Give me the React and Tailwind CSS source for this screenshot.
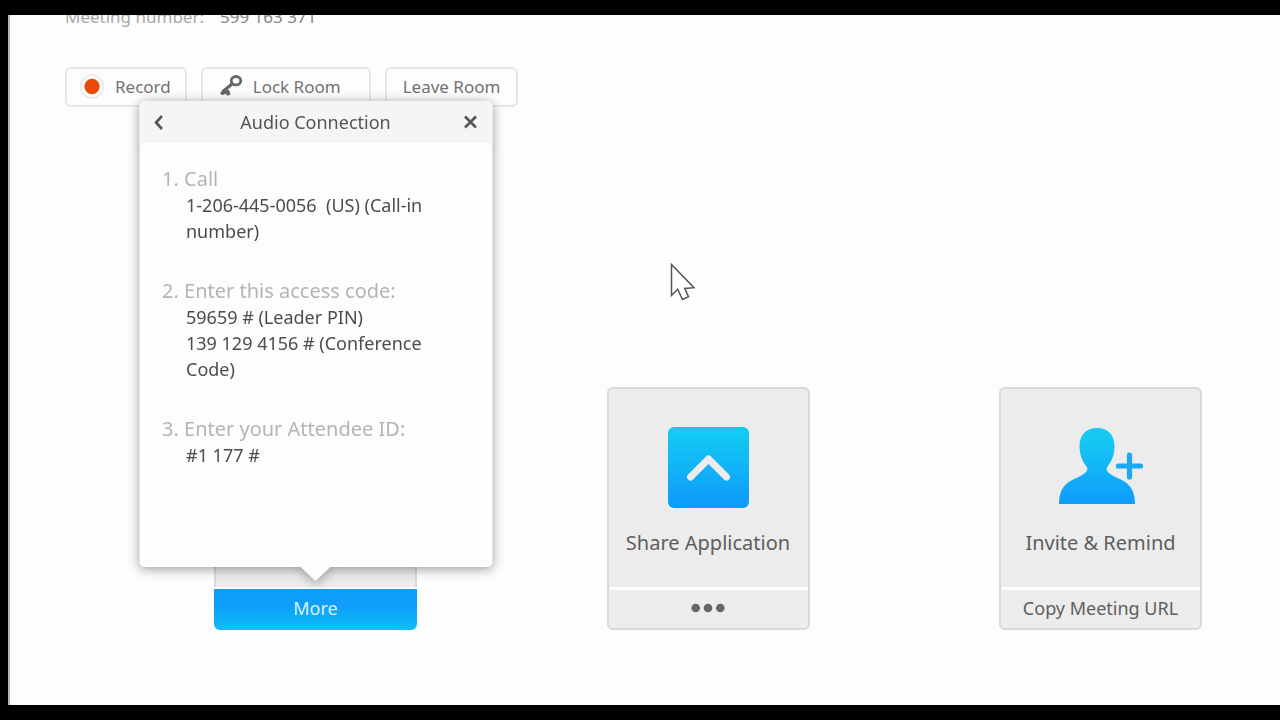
import React from "react";

const steps = [
  { title: "Call", lines: ["1-206-445-0056\u00a0 (US) (Call-in number)"] },
  {
    title: "Enter this access code:",
    lines: ["59659 # (Leader PIN)", "139 129 4156 # (Conference Code)"],
  },
  { title: "Enter your Attendee ID:", lines: ["#1 177 #"] },
];

const RecordIcon = () => (
  <svg className="h-[26px] w-[26px]" viewBox="0 0 26 26" aria-hidden="true">
    <circle cx="13" cy="12.5" r="11.5" fill="#fdfdfd" stroke="#e8e8e8" strokeWidth="1.5" />
    <circle cx="13" cy="12.5" r="7.7" fill="#e84a06" />
  </svg>
);

const KeyIcon = () => (
  <svg className="h-6 w-6" viewBox="0 0 24 24" fill="none" stroke="#666" aria-hidden="true">
    <ellipse cx="17" cy="5.700" rx="4.800" ry="4.200" strokeWidth="2.800" />
    <path d="M13.200 8.800 3.500 17" strokeWidth="3.400" />
    <path d="M1 18l4.500-4.400 4.800 1.800 1.200 4-2.800 1.400-2.400-2-3.300 1.400z" fill="#666" stroke="none" />
  </svg>
);

const ShareIcon = () => (
  <svg className="h-[81px] w-[81px]" viewBox="0 0 81 81" fill="none" aria-hidden="true">
    <defs>
      <linearGradient id="shareFill" x1="0" y1="0" x2="0" y2="1">
        <stop offset="0.1" stopColor="#12caf2" />
        <stop offset="0.9" stopColor="#0f9dfb" />
      </linearGradient>
    </defs>
    <rect width="81" height="81" rx="6" fill="url(#shareFill)" />
    <path d="M22.5 50 40.5 32l18 18" stroke="#ececee" strokeWidth="7" strokeLinecap="round" strokeLinejoin="round" />
  </svg>
);

const InviteIcon = () => (
  <svg className="h-[78px] w-[86px]" viewBox="0 0 86 78" aria-hidden="true">
    <defs>
      <linearGradient id="inviteFill" x1="0" y1="0" x2="0" y2="1">
        <stop offset="0.15" stopColor="#14c8f2" />
        <stop offset="0.95" stopColor="#0f9ffb" />
      </linearGradient>
    </defs>
    <path
      fill="url(#inviteFill)"
      d="M39 1c11 0 17.500 7 17.500 18.500 0 9-3.600 16-7 20-1.600 2.500-1 4.500 1.500 6.500 4 3.300 9.500 5 15 8.300 7.500 4.700 11 11.700 11 22.700H1c0-11 3.500-18 11-22.700 5.500-3.300 11-5 15-8.300 2.500-2 3.100-4 1.500-6.500-3.400-4-7-11-7-20C21.500 8 28 1 39 1z"
    />
    <path d="M60.500 39h22M71.500 28v22" stroke="#1aa9f5" strokeWidth="5.200" strokeLinecap="round" />
  </svg>
);

const ToolbarButton = ({ icon, className, children }) => (
  <button
    type="button"
    className={`flex h-10 items-center gap-[10px] rounded-md border-2 border-[#e6e6e6] text-[17px] text-[#727272] ${className}`}
  >
    {icon}
    {children}
  </button>
);

const ActionCard = ({ icon, label, footer, footerLabel }) => (
  <section className="w-[203px] overflow-hidden rounded-md border-2 border-[#d9d9d9] bg-[#ececec] text-[#5e5e5e]">
    <button type="button" className="flex h-[198px] w-full flex-col items-center pt-[38px]">
      <span className="flex h-[81px] items-start">{icon}</span>
      <span className="mt-5 text-xl leading-[30px]">{label}</span>
    </button>
    <button
      type="button"
      aria-label={footerLabel}
      className="flex h-[41px] w-full items-center justify-center border-t-3 border-white pb-0.5 text-lg"
    >
      {footer}
    </button>
  </section>
);

const AudioPopover = () => (
  <div
    role="dialog"
    aria-labelledby="audio-title"
    className="absolute bottom-[63px] left-1/2 h-[466px] w-[353px] -translate-x-1/2 drop-shadow-[0_2px_6px_rgba(0,0,0,0.4)]"
  >
    <div className="h-full overflow-hidden rounded-[5px] bg-[#fdfdfd]">
      <header className="flex h-[42px] items-center justify-between bg-[#f5f5f5] px-[14px] text-[#555]">
        <button type="button" aria-label="Back">
          <svg className="h-4 w-4" viewBox="0 0 16 16" fill="none" stroke="currentColor" strokeWidth="2.6">
            <path d="M8.500 2 2.500 8.500l6 6.500" />
          </svg>
        </button>
        <h2 id="audio-title" className="text-lg">Audio Connection</h2>
        <button type="button" aria-label="Close">
          <svg className="h-4 w-4" viewBox="0 0 16 16" fill="none" stroke="currentColor" strokeWidth="2.6">
            <path d="M2.500 2.500l11 11M13.500 2.500l-11 11" />
          </svg>
        </button>
      </header>

      <ol className="flex flex-col gap-[34px] px-[23px] pt-[23px]">
        {steps.map((step, i) => (
          <li key={step.title}>
            <h3 className="text-xl leading-[26px] text-[#b4b4b4]">
              {i + 1}. {step.title}
            </h3>
            {step.lines.map((line) => (
              <p key={line} className="pl-6 text-lg leading-[26px] text-[#4c4c4c]">{line}</p>
            ))}
          </li>
        ))}
      </ol>
    </div>

    {/* Pointer towards the More button */}
    <svg className="absolute top-full left-1/2 h-[14px] w-[30px] -translate-x-1/2" viewBox="0 0 30 14" aria-hidden="true">
      <path d="M0 0h30L15 14z" fill="#fdfdfd" />
    </svg>
  </div>
);

const AudioCard = () => (
  <section className="relative w-[203px]">
    <div className="h-[200px] rounded-t-md border-x-2 border-t-2 border-[#d9d9d9] bg-[#ececec]" />
    <button
      type="button"
      className="flex h-[43px] w-full items-center justify-center rounded-b-md border-t-2 border-white bg-linear-to-b from-[#0f9dfb] from-40% to-[#12bdf5] pb-1 text-lg text-[#d9f2ff]"
    >
      More
    </button>
    <AudioPopover />
  </section>
);

const Dots = () => (
  <svg className="h-[10px] w-[34px]" viewBox="0 0 34 10" fill="#666" aria-hidden="true">
    <circle cx="4.700" cy="5" r="4.300" />
    <circle cx="17" cy="5" r="4.300" />
    <circle cx="29.300" cy="5" r="4.300" />
  </svg>
);

export default function App() {
  return (
    <div className="flex min-h-screen bg-black py-[15px] pl-2 font-['Noto_Sans','Open_Sans',sans-serif]">
      <main className="relative flex-1 overflow-hidden border-l-2 border-[#b5b5b5] bg-[#fdfdfd]">
        <dl className="-mt-[10px] ml-[55px] flex gap-4 text-[17px] leading-6">
          <dt className="text-[#a8a8a8]">Meeting number:</dt>
          <dd className="text-[#858585]">599 163 371</dd>
        </dl>

        <div className="mt-[38px] ml-[55px] flex gap-[14px]">
          <ToolbarButton icon={<RecordIcon />} className="pr-[14px] pl-3">Record</ToolbarButton>
          <ToolbarButton icon={<KeyIcon />} className="pr-7 pl-4">Lock Room</ToolbarButton>
          <ToolbarButton className="px-4">Leave Room</ToolbarButton>
        </div>

        <div className="mt-[280px] flex justify-between pr-[78px] pl-[204px]">
          <AudioCard />
          <ActionCard icon={<ShareIcon />} label="Share Application" footer={<Dots />} footerLabel="More share options" />
          <ActionCard icon={<InviteIcon />} label="Invite & Remind" footer="Copy Meeting URL" />
        </div>

        {/* Mouse pointer */}
        <svg
          className="absolute top-[248px] left-[660px] h-[38px] w-[26px]"
          viewBox="0 0 26 38"
          fill="#fff"
          stroke="#555"
          strokeWidth="1.500"
          aria-hidden="true"
        >
          <path d="M1.500 1.500v31l6.200-6.200 4.800 10.200 6-2.800-3.800-8.200 9.300-.8z" />
        </svg>
      </main>
    </div>
  );
}
